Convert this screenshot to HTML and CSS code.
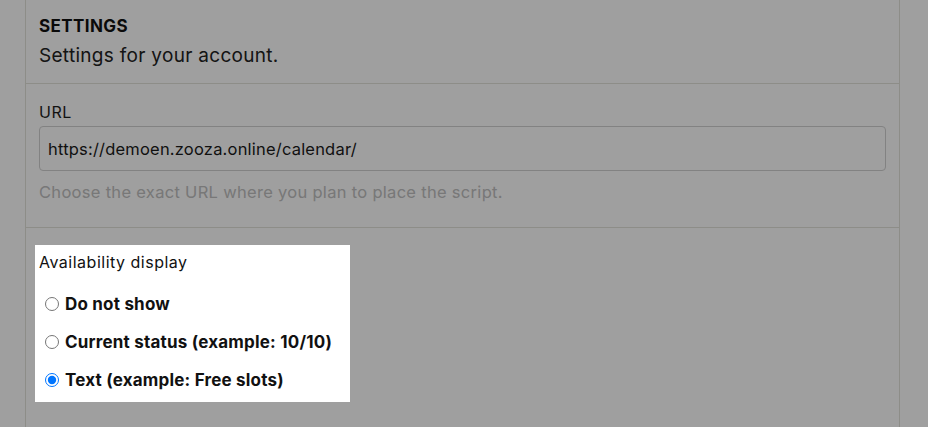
FILE: index.html
```html
<!DOCTYPE html>
<html lang="en">
<head>
<meta charset="utf-8">
<title>Settings</title>
<link rel="stylesheet" href="styles.css">
</head>
<body>
<div class="page">
  <section class="card">
    <header class="card-head">
      <h2 class="card-title">SETTINGS</h2>
      <p class="card-sub">Settings for your account.</p>
    </header>
    <div class="card-section">
      <label class="field-label" for="url">URL</label>
      <input class="field-input" id="url" type="text" value="https://demoen.zooza.online/calendar/">
      <p class="field-help">Choose the exact URL where you plan to place the script.</p>
    </div>
    <div class="card-section card-section-last">
      <div class="tour-target">
        <div class="field-label target-label">Availability display</div>
        <label class="radio-row"><input class="radio" type="radio" name="avail"><span>Do not show</span></label>
        <label class="radio-row"><input class="radio" type="radio" name="avail"><span>Current status (example: 10/10)</span></label>
        <label class="radio-row"><input class="radio" type="radio" name="avail" checked><span>Text (example: Free slots)</span></label>
      </div>
    </div>
  </section>
</div>
<div class="tour-overlay"></div>
</body>
</html>
```
FILE: styles.css
```css
* { box-sizing: border-box; }
html, body { margin: 0; padding: 0; background: #ffffff; }
body {
  font-family: "Inter", "Liberation Sans", sans-serif;
  color: #222222;
  height: 427px;
  overflow: hidden;
}
.page {
  padding-left: 25px;
}
.card {
  width: 875px;
  border-left: 1px solid #e3e3da;
  border-right: 1px solid #e3e3da;
  min-height: 427px;
  background: #ffffff;
}
.card-head {
  padding: 14px 13px 13px;
  border-bottom: 1px solid #e3e3da;
}
.card-title {
  margin: 0;
  font-size: 17px;
  line-height: 24px;
  font-weight: 700;
  letter-spacing: 0.4px;
  color: #111111;
}
.card-sub {
  margin: 4px 0 0;
  font-size: 19px;
  line-height: 28px;
  letter-spacing: 0.3px;
  color: #222222;
}
.card-section {
  padding: 17px 13px 23px;
  border-bottom: 1px solid #e3e3da;
}
.card-section-last {
  border-bottom: none;
}
.field-label {
  display: block;
  font-size: 16px;
  line-height: 22px;
  letter-spacing: 0.5px;
  margin-bottom: 3px;
  color: #1e1e1e;
}
.field-input {
  display: block;
  width: 100%;
  height: 45px;
  border: 1px solid #d0d0d0;
  border-radius: 4px;
  padding: 0 8px;
  font-family: inherit;
  font-size: 16.5px;
  letter-spacing: 0.2px;
  color: #1a1a1a;
  background: #ffffff;
  outline: none;
}
.field-help {
  margin: 9px 0 0;
  font-size: 16.5px;
  line-height: 24px;
  letter-spacing: 0.3px;
  color: #c0c0c0;
}
.tour-target {
  position: relative;
  z-index: 20;
  background: #ffffff;
  width: 315px;
  margin-left: -4px;
  padding: 6px 4px 3px;
}
.target-label {
  margin-bottom: 12px;
  color: #111111;
}
.radio-row {
  display: flex;
  align-items: center;
  height: 38px;
  font-size: 17px;
  line-height: 24px;
  letter-spacing: 0.2px;
  font-weight: 700;
  color: #111111;
}
.radio {
  width: 14px;
  height: 14px;
  margin: 0 6px 0 6px;
  flex: none;
}
.tour-overlay {
  position: fixed;
  inset: 0;
  background: rgba(0, 0, 0, 0.375);
  z-index: 10;
}
```
